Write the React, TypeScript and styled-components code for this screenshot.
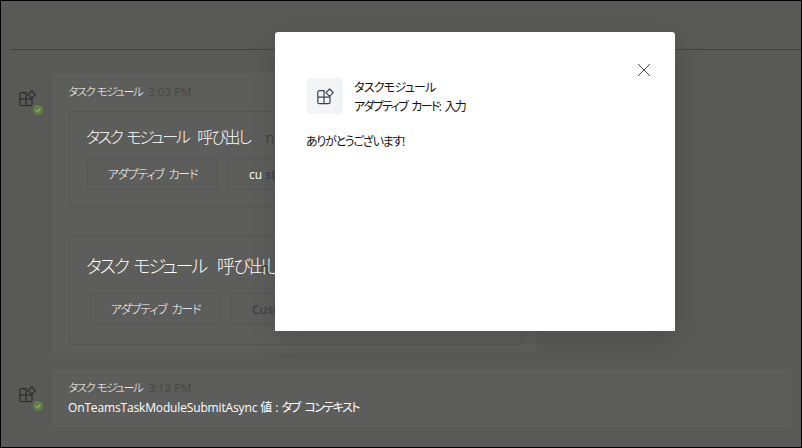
import React from "react";
import styled, { createGlobalStyle } from "styled-components";

const Global = createGlobalStyle`
  html, body { margin: 0; padding: 0; background: #595957; }
  * { box-sizing: border-box; }
`;

const jp = `"Open Sans", "Noto Sans CJK JP", sans-serif`;

const Page = styled.div`
  position: relative;
  width: 802px;
  height: 448px;
  overflow: hidden;
  background: #595957;
  border: 1px solid #000;
  font-family: ${jp};
  font-feature-settings: "palt";
  font-weight: 300;
  color: #fff;
  padding-left: 10px;
`;

const TopBar = styled.div`
  height: 49px;
  border-bottom: 1px solid #3f3f4b;
`;

const Feed = styled.div`
  display: flex;
  flex-direction: column;
  gap: 16px;
  padding-top: 23px;
  padding-right: 10px;
`;

const Row = styled.div`
  display: flex;
  align-items: flex-start;
`;

const Avatar = styled.div`
  position: relative;
  width: 42px;
  padding: 17px 0 0 8px;
  flex: none;
  line-height: 0;
`;

const StatusDot = styled.span`
  position: absolute;
  left: 22px;
  top: 32px;
  width: 10px;
  height: 10px;
  line-height: 0;
`;

const Bubble = styled.div<{ $w: number; $h: number }>`
  width: ${(p) => p.$w}px;
  height: ${(p) => p.$h}px;
  background: #5d5d5b;
  border-radius: 3px;
  padding: 10px 15px 0 16px;
  flex: none;
`;

const Meta = styled.div`
  display: flex;
  align-items: baseline;
  gap: 6px;
  height: 17px;
  margin-left: -1px;
  font-size: 11.5px;
  line-height: 17px;
  letter-spacing: -1.5px;
  word-spacing: 1px;
`;

const Time = styled.span`
  color: #464644;
  font-size: 11.5px;
  letter-spacing: 0;
  word-spacing: 0;
  font-weight: 400;
`;

const Card = styled.div<{ $h: number; $mt: number; $pt: number }>`
  height: ${(p) => p.$h}px;
  margin-top: ${(p) => p.$mt}px;
  border: 1px solid #545452;
  border-radius: 3px;
  padding: ${(p) => p.$pt}px 16px 0;
`;

const CardTitle = styled.div<{ $size: number; $after: number }>`
  display: flex;
  align-items: baseline;
  font-size: ${(p) => p.$size}px;
  line-height: 22px;
  white-space: nowrap;
  letter-spacing: ${(p) => (p.$size > 16 ? "-2.1px" : "-2.4px")};
  word-spacing: 3px;

  & > span:nth-child(2) {
    margin-left: ${(p) => (p.$size > 16 ? 11 : 9)}px;
    letter-spacing: ${(p) => (p.$size > 16 ? "-1.8px" : "-2.1px")};
  }
  & > span:nth-child(3) {
    margin-left: ${(p) => p.$after}px;
  }
`;

const Hidden = styled.span`
  color: #424240;
  font-weight: 400;
  font-size: 14px;
`;

const Buttons = styled.div<{ $mt: number; $ml: number }>`
  display: flex;
  gap: 9px;
  margin-top: ${(p) => p.$mt}px;
  margin-left: ${(p) => p.$ml}px;
`;

const CardButton = styled.div<{ $left?: boolean }>`
  width: 131px;
  height: 32px;
  flex: none;
  display: flex;
  align-items: center;
  justify-content: ${(p) => (p.$left ? "flex-start" : "center")};
  padding-left: ${(p) => (p.$left ? "21px" : "0")};
  border: 1px solid #545458;
  border-radius: 3px;
  font-size: 12px;
  letter-spacing: -1.2px;
  word-spacing: 3px;
`;

const DarkLabel = styled.span`
  color: #41414f;
  font-weight: 600;
  letter-spacing: 0;
  word-spacing: 0;
`;

const LightLabel = styled.span`
  color: #fff;
  font-weight: 400;
  letter-spacing: 0;
`;

const BodyLine = styled.div`
  display: flex;
  margin-top: 3px;
  margin-left: -1px;
  font-size: 12px;
  line-height: 18px;
  font-weight: 400;
  letter-spacing: -0.15px;
`;

const BodyJp = styled.span`
  margin-left: 3px;
  letter-spacing: -1.5px;
  word-spacing: 3px;
`;

const Modal = styled.div`
  position: absolute;
  left: 274px;
  top: 31px;
  width: 400px;
  height: 299px;
  background: #fff;
  border-radius: 3px 3px 0 0;
  box-shadow: 0 8px 28px rgba(0, 0, 0, 0.14);
  color: #111;
  padding: 46px 32px 0 31px;
`;

const Close = styled.button`
  position: absolute;
  right: 24px;
  top: 31px;
  width: 14px;
  height: 14px;
  padding: 0;
  border: 0;
  background: none;
  line-height: 0;
`;

const Head = styled.div`
  display: flex;
  align-items: flex-start;
  gap: 11px;
  margin-left: 1px;
`;

const IconTile = styled.div`
  width: 36px;
  height: 36px;
  border-radius: 4px;
  background: #f3f4f6;
  display: flex;
  align-items: center;
  justify-content: center;
`;

const HeadText = styled.div`
  display: flex;
  flex-direction: column;
  gap: 2px;
  padding-top: 1px;
  font-size: 12px;
  line-height: 17px;
  font-weight: 400;
`;

const HeadName = styled.span`
  letter-spacing: -0.75px;
`;

const HeadSub = styled.span`
  letter-spacing: -1.7px;
  word-spacing: 3px;
`;

const Thanks = styled.div`
  margin-top: 18px;
  font-size: 12px;
  line-height: 18px;
  font-weight: 400;
  letter-spacing: -1.3px;
`;

const AppIcon = ({ color }: { color: string }) => (
  <svg width="17" height="17" viewBox="0 0 17 17" fill="none" stroke={color} strokeWidth="1.2">
    <path d="M7.5 2.6H2.4A1.6 1.6 0 0 0 .8 4.2v9.9a1.6 1.6 0 0 0 1.6 1.6h9a1.6 1.6 0 0 0 1.6-1.6V9.2H.8" />
    <path d="M7 2.6v13.1" />
    <path d="M12.6 1l3.7 3.7-3.7 3.7-3.7-3.7z" strokeLinejoin="round" />
  </svg>
);

const Status = () => (
  <StatusDot>
    <svg width="10" height="10" viewBox="0 0 10 10">
      <circle cx="5" cy="5" r="5" fill="#5f8240" />
      <path d="M2.8 5.1l1.6 1.6 2.9-3" fill="none" stroke="#b9c6a9" strokeWidth="1" />
    </svg>
  </StatusDot>
);

export default function App() {
  return (
    <Page>
      <Global />
      <TopBar />
      <Feed>
        <Row>
          <Avatar>
            <AppIcon color="#2c2c30" />
            <Status />
          </Avatar>
          <Bubble $w={484} $h={280}>
            <Meta>
              <span>タスク モジュール</span>
              <Time>3:03 PM</Time>
            </Meta>
            <Card $h={96} $mt={11} $pt={14}>
              <CardTitle $size={16} $after={16}>
                <span>タスク モジュール</span>
                <span>呼び出し</span>
                <Hidden>n</Hidden>
              </CardTitle>
              <Buttons $mt={9} $ml={1}>
                <CardButton>アダプティブ カード</CardButton>
                <CardButton $left>
                  <LightLabel>cu</LightLabel>
                  <DarkLabel>&nbsp;stom</DarkLabel>
                </CardButton>
              </Buttons>
            </Card>
            <Card $h={110} $mt={28} $pt={19}>
              <CardTitle $size={18} $after={-18}>
                <span>タスク モジュール</span>
                <span>呼び出し</span>
                <Hidden>n</Hidden>
              </CardTitle>
              <Buttons $mt={14} $ml={4}>
                <CardButton>アダプティブ カード</CardButton>
                <CardButton $left>
                  <DarkLabel>Custom</DarkLabel>
                </CardButton>
              </Buttons>
            </Card>
          </Bubble>
        </Row>
        <Row>
          <Avatar>
            <AppIcon color="#2c2c30" />
            <Status />
          </Avatar>
          <Bubble $w={738} $h={58}>
            <Meta>
              <span>タスク モジュール</span>
              <Time>3:12 PM</Time>
            </Meta>
            <BodyLine>
              <span>OnTeamsTaskModuleSubmitAsync</span>
              <BodyJp>値 : タブ コンテキスト</BodyJp>
            </BodyLine>
          </Bubble>
        </Row>
      </Feed>
      <Modal>
        <Close aria-label="閉じる">
          <svg width="14" height="14" viewBox="0 0 14 14" stroke="#444" strokeWidth="1" fill="none">
            <path d="M1 1l12 12M13 1L1 13" />
          </svg>
        </Close>
        <Head>
          <IconTile>
            <AppIcon color="#3a4258" />
          </IconTile>
          <HeadText>
            <HeadName>タスクモジュール</HeadName>
            <HeadSub>アダプティブ カード: 入力</HeadSub>
          </HeadText>
        </Head>
        <Thanks>ありがとうございます!</Thanks>
      </Modal>
    </Page>
  );
}
